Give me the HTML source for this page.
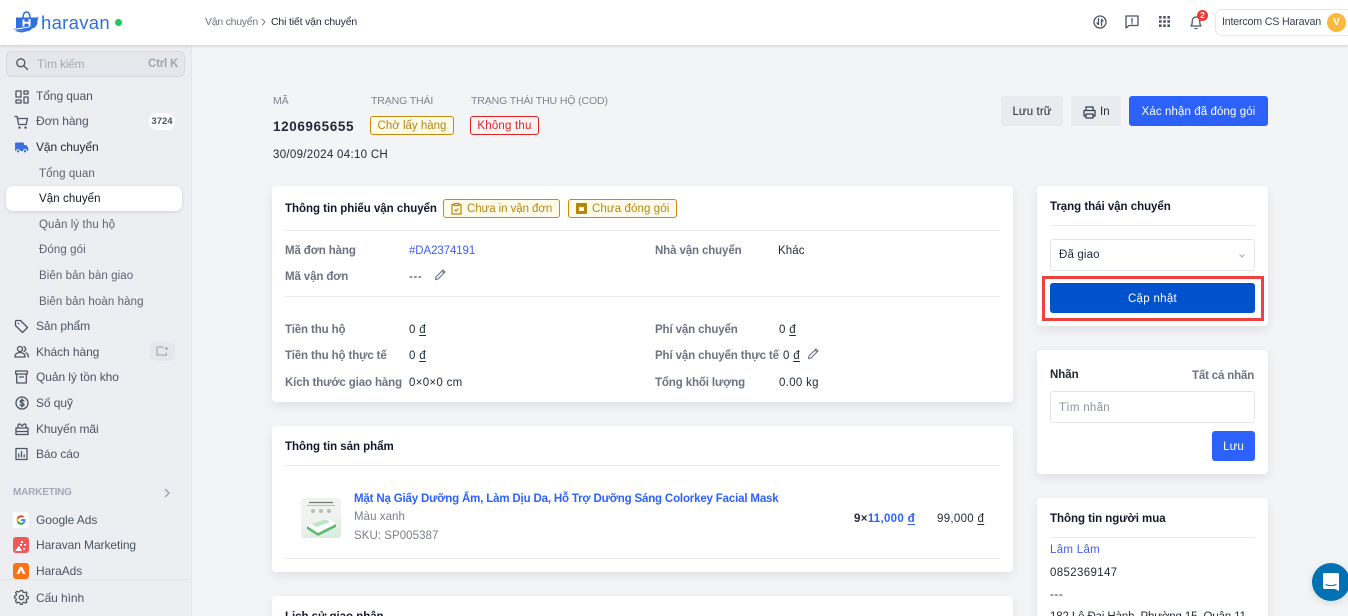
<!DOCTYPE html>
<html lang="vi"><head><meta charset="utf-8"><title>Chi tiết vận chuyển</title>
<style>
*{box-sizing:border-box}
html,body{margin:0;padding:0;width:1348px;height:616px;overflow:hidden;background:#f3f4f6;font-family:"Liberation Sans","Noto Sans CJK SC",sans-serif;font-size:12px;color:#212b36}
#p{position:relative;width:1348px;height:616px;overflow:hidden}
.t{position:absolute;white-space:nowrap;line-height:16px;letter-spacing:.3px;margin-top:1px}
.a{position:absolute}
.card{position:absolute;background:#fff;border-radius:4px;box-shadow:0 4px 10px rgba(33,43,54,.09)}
.hr{position:absolute;height:1px;background:#e8eaed}
.nav{color:#4b5563;font-size:12px;letter-spacing:-.08px;margin-top:0}
.sub{color:#5b6472;font-size:11.5px;letter-spacing:.09px}
.lb{color:#6b7280;font-weight:bold;font-size:11.5px;letter-spacing:-.12px}
.h{font-weight:bold;color:#111827;font-size:11.5px;letter-spacing:-.03px}
.up{color:#7b8494;font-size:10.5px;letter-spacing:-.12px;margin-top:0}
.btn{position:absolute;border-radius:3px;text-align:center;font-size:11.5px;letter-spacing:.1px;padding-top:1px}
.tag{position:absolute;border:1px solid #c98a0c;background:#fffbeb;color:#b7860f;border-radius:3px;height:19px;line-height:18px;font-size:11.5px;letter-spacing:0;white-space:nowrap}
svg{position:absolute;overflow:visible}
.i{fill:none;stroke:#4b5563;stroke-width:1.3;stroke-linecap:round;stroke-linejoin:round}
u{text-underline-offset:2px}
</style></head><body><div id="p">

<!-- sidebar -->
<div class="a" style="left:0;top:45px;width:192px;height:571px;background:#edeef2;border-right:1px solid #e3e5e9"></div>
<div class="a" style="left:6px;top:51px;width:179px;height:26px;background:#e5e7eb;border:1px solid #d5d8de;border-radius:6px"></div>
<svg style="left:15px;top:57px" width="14" height="14" viewBox="0 0 14 14"><circle class="i" cx="5.8" cy="5.8" r="4"/><path class="i" d="M8.8 8.8L12.6 12.6"/></svg>
<div class="t" style="left:37px;top:56px;margin-top:0;color:#a5abb7;letter-spacing:-.25px">Tìm kiếm</div>
<div class="t" style="left:148px;top:56px;margin-top:0;color:#a0a6b2;font-weight:bold;font-size:11.5px;letter-spacing:-.2px">Ctrl K</div>

<svg style="left:15px;top:90px" width="14" height="14" viewBox="0 0 14 14"><path class="i" d="M1 1h5v6H1zM9 1h4v3H9zM9 7h4v6H9zM1 10h5v3H1z"/></svg>
<div class="t nav" style="left:36px;top:88px">Tổng quan</div>
<svg style="left:14px;top:115px" width="15" height="15" viewBox="0 0 15 15"><path class="i" d="M1 1.500h2l1.600 8h7.600l1.300-6H3.500"/><circle cx="5.500" cy="12.600" r="1.200" fill="#4b5563"/><circle cx="11.500" cy="12.600" r="1.200" fill="#4b5563"/></svg>
<div class="t nav" style="left:36px;top:113px">Đơn hàng</div>
<div class="a" style="left:149px;top:113px;width:26px;height:17px;background:#fff;border-radius:9px;text-align:center;font-size:9.500px;line-height:17px;font-weight:bold;color:#4b5563">3724</div>
<svg style="left:14px;top:141px" width="15" height="13" viewBox="0 0 15 13"><path d="M1 2.500A1 1 0 0 1 2 1.500h7a1 1 0 0 1 1 1V4h2.200l2 2.600V10h-13z" fill="#3c6fdc"/><circle cx="4" cy="10.300" r="1.700" fill="#3c6fdc" stroke="#edeef2"/><circle cx="11" cy="10.300" r="1.700" fill="#3c6fdc" stroke="#edeef2"/></svg>
<div class="t nav" style="left:36px;top:139px;color:#1f2937">Vận chuyển</div>
<div class="t sub" style="left:39px;top:165px">Tổng quan</div>
<div class="a" style="left:6px;top:186px;width:176px;height:25px;background:#fff;border-radius:7px;box-shadow:0 1px 3px rgba(0,0,0,.12)"></div>
<div class="t sub" style="left:39px;top:190px;color:#111827">Vận chuyển</div>
<div class="t sub" style="left:39px;top:216px">Quản lý thu hộ</div>
<div class="t sub" style="left:39px;top:241px">Đóng gói</div>
<div class="t sub" style="left:39px;top:267px">Biên bản bàn giao</div>
<div class="t sub" style="left:39px;top:293px">Biên bản hoàn hàng</div>

<svg style="left:14px;top:319px" width="15" height="15" viewBox="0 0 15 15"><path class="i" d="M1.500 2.500a1 1 0 0 1 1-1h4l7 7-5 5-7-7z"/><circle cx="4.500" cy="4.500" r=".8" fill="#4b5563"/></svg>
<div class="t nav" style="left:36px;top:318px">Sản phẩm</div>
<svg style="left:14px;top:345px" width="15" height="14" viewBox="0 0 15 14"><circle class="i" cx="6" cy="4" r="2.500"/><path class="i" d="M1 12c0-3 2-4.500 5-4.500s5 1.500 5 4.500zM10 1.700a2.500 2.500 0 0 1 0 4.700M12 8c1.500.5 2.300 2 2.300 4"/></svg>
<div class="t nav" style="left:36px;top:344px">Khách hàng</div>
<div class="a" style="left:150px;top:342px;width:25px;height:19px;background:#e5e7eb;border-radius:6px"></div>
<svg style="left:156px;top:346px" width="13" height="10" viewBox="0 0 13 10"><path d="M8 1H1v8h9.500V6.500M10.500 1v3M9 2.500h3" fill="none" stroke="#9ca3af"/></svg>
<svg style="left:15px;top:370px" width="13" height="14" viewBox="0 0 13 14"><path class="i" d="M.7 1h11.600v3H.7zM1.700 4v9h9.600V4M4.500 7h4"/></svg>
<div class="t nav" style="left:36px;top:369px">Quản lý tồn kho</div>
<svg style="left:15px;top:396px" width="14" height="14" viewBox="0 0 14 14"><circle class="i" cx="7" cy="7" r="6"/><path class="i" d="M9 5c-.5-1-3.800-1.300-3.800.6 0 1.800 3.800.9 3.800 2.800 0 1.800-3.400 1.600-4 .5M7 3v8"/></svg>
<div class="t nav" style="left:36px;top:395px">Số quỹ</div>
<svg style="left:15px;top:422px" width="14" height="14" viewBox="0 0 14 14"><path class="i" d="M1 6h12v6.500H1zM1 9.500h12M3 6V3M11 6V3M3 3c1-2 2-1 4 1 2-2 3-3 4-1"/></svg>
<div class="t nav" style="left:36px;top:421px">Khuyến mãi</div>
<svg style="left:15px;top:447px" width="13" height="14" viewBox="0 0 13 14"><path class="i" d="M1 1.500h11v11H1zM3.800 10V7M6.500 10V4.500M9.200 10V8"/></svg>
<div class="t nav" style="left:36px;top:446px">Báo cáo</div>
<div class="t" style="left:13px;top:484px;color:#a3a9b5;font-size:10px;font-weight:bold;letter-spacing:-.2px">MARKETING</div>
<svg style="left:164px;top:488px" width="6" height="10" viewBox="0 0 6 10"><path d="M1 1l4 4-4 4" fill="none" stroke="#9ca3af" stroke-width="1.400"/></svg>

<div class="a" style="left:13px;top:512px;width:16px;height:16px;background:#fff;border-radius:3px"></div>
<svg style="left:16px;top:515px" width="10" height="10" viewBox="0 0 10 10"><path d="M9.500 5.100c0-.4 0-.7-.1-1H5v1.900h2.500c-.1.600-.5 1.100-1 1.400l1.500 1.200c.9-.8 1.500-2 1.500-3.500z" fill="#4285f4"/><path d="M5 9.800c1.300 0 2.300-.4 3-1.200L6.500 7.400c-.4.300-1 .4-1.500.4-1.200 0-2.200-.8-2.600-1.900L.9 7.100C1.700 8.700 3.200 9.800 5 9.800z" fill="#34a853"/><path d="M2.400 5.900c-.2-.6-.2-1.200 0-1.800L.9 2.900c-.6 1.300-.6 2.900 0 4.200z" fill="#fbbc05"/><path d="M5 2.100c.7 0 1.300.2 1.800.7l1.300-1.300C7.300.7 6.200.2 5 .2 3.200.2 1.700 1.300.9 2.900l1.500 1.200C2.800 3 3.800 2.100 5 2.100z" fill="#ea4335"/></svg>
<div class="t nav" style="left:36px;top:512px">Google Ads</div>
<div class="a" style="left:13px;top:537px;width:16px;height:16px;background:#ee5a5a;border-radius:3px"></div>
<svg style="left:14px;top:539px" width="14" height="13" viewBox="0 0 14 13"><path d="M1 12l4-5 3 5zM7 2h2v2H7zM10 5h2v1.500h-2zM6 5h2v2H6zM9 9h2v1.500H9z" fill="#fff"/></svg>
<div class="t nav" style="left:36px;top:537px">Haravan Marketing</div>
<div class="a" style="left:13px;top:563px;width:16px;height:16px;background:#f97316;border-radius:3px"></div>
<svg style="left:16px;top:566px" width="10" height="9" viewBox="0 0 10 9"><path d="M3.800 1h2.400L9.500 8H7L5 4 3 8H.5z" fill="#fff"/></svg>
<div class="t nav" style="left:36px;top:563px">HaraAds</div>
<div class="a" style="left:0;top:579px;width:191px;height:37px;background:#edeef2;border-top:1px solid #e1e3e7"></div>
<svg style="left:14px;top:590px" width="15" height="15" viewBox="0 0 15 15"><circle class="i" cx="7.500" cy="7.500" r="2.200"/><path class="i" d="M6.500 1h2l.4 1.700 1.500.7 1.600-.8 1.300 1.500-1 1.400.5 1.600 1.700.5v2l-1.700.4-.6 1.500.9 1.500-1.500 1.300-1.500-.9-1.500.6-.4 1.700h-2l-.4-1.700-1.500-.6-1.500.9L1 12.300l.9-1.500-.6-1.500L0 8.900v-2l1.600-.5.500-1.600-1-1.400 1.400-1.500 1.500.8 1.500-.7z" transform="translate(.5 -.5) scale(.95)"/></svg>
<div class="t nav" style="left:36px;top:590px">Cấu hình</div>

<!-- topbar -->
<div class="a" style="left:0;top:0;width:1348px;height:45px;background:#fff;box-shadow:0 1px 3px rgba(0,0,0,.15)"></div>
<svg style="left:13px;top:11px" width="26" height="23" viewBox="0 0 26 23"><path d="M10 7c0-4 1.500-6 3.500-6S17 3 17 7" fill="none" stroke="#2f6fde" stroke-width="1.500"/><path d="M3 6.500h21l1.500-1-2 9-20.500 3z" fill="#2f6fde"/><path d="M10.500 8.500v7M16.500 8v7M10.500 11.800h6" stroke="#fff" stroke-width="2" fill="none"/><path d="M0 17l4 1.500 12-2 9-5-3 5-10 3-8 .5z" fill="#2f6fde"/><path d="M2 20.500l10-1 8-3-3 3-8 2z" fill="#2f6fde"/></svg>
<div class="t" style="left:41px;top:12px;margin-top:0;color:#2f6fde;font-size:18.500px;line-height:21px;letter-spacing:.3px">haravan</div>
<div class="a" style="left:115px;top:19px;width:7px;height:7px;border-radius:50%;background:#22c55e"></div>
<div class="t" style="left:205px;top:13px;color:#6b7280;font-size:10.500px;letter-spacing:-.25px">Vận chuyển</div>
<svg style="left:261px;top:18px" width="5" height="8" viewBox="0 0 5 8"><path d="M1 .8L4 4 1 7.200" fill="none" stroke="#6b7280" stroke-width=".9"/></svg>
<div class="t" style="left:271px;top:13px;color:#212b36;font-size:10.500px;letter-spacing:-.17px">Chi tiết vận chuyển</div>

<svg style="left:1093px;top:15px" width="14" height="14" viewBox="0 0 14 14"><circle class="i" cx="7" cy="7" r="6"/><path class="i" d="M5.500 3.500v6M5.500 9.500L4 8M8.500 10.500v-6M8.500 4.500L10 6"/></svg>
<svg style="left:1125px;top:15px" width="14" height="14" viewBox="0 0 14 14"><path class="i" d="M1 1h12v9.500H4L1 13zM7 3.500v3.500M7 8.500v.3"/></svg>
<svg style="left:1159px;top:16px" width="11" height="11" viewBox="0 0 11 11" fill="#4b5563"><rect width="2.600" height="2.600"/><rect x="4.200" width="2.600" height="2.600"/><rect x="8.400" width="2.600" height="2.600"/><rect y="4.200" width="2.600" height="2.600"/><rect x="4.200" y="4.200" width="2.600" height="2.600"/><rect x="8.400" y="4.200" width="2.600" height="2.600"/><rect y="8.400" width="2.600" height="2.600"/><rect x="4.200" y="8.400" width="2.600" height="2.600"/><rect x="8.400" y="8.400" width="2.600" height="2.600"/></svg>
<svg style="left:1190px;top:15px" width="12" height="15" viewBox="0 0 12 15"><path class="i" d="M1 11c1.200-1 1.200-2.500 1.200-4.500C2.200 4 3.500 2 6 2s3.800 2 3.800 4.500c0 2 0 3.500 1.200 4.500zM5 13.500h2"/></svg>
<div class="a" style="left:1197px;top:10px;width:11px;height:11px;border-radius:50%;background:#ef3a32;color:#fff;font-size:8.500px;font-weight:bold;line-height:11px;text-align:center">2</div>
<div class="a" style="left:1215px;top:9px;width:140px;height:27px;background:#fff;border:1px solid #e5e7eb;border-radius:7px"></div>
<div class="t" style="left:1222px;top:13px;color:#374151;font-size:10.700px;letter-spacing:-.2px">Intercom CS Haravan</div>
<div class="a" style="left:1327px;top:13px;width:19px;height:19px;border-radius:50%;background:#fbb93c;color:#fff;font-size:10px;font-weight:bold;line-height:19px;text-align:center">V</div>

<!-- header -->
<div class="t up" style="left:273px;top:93px">MÃ</div>
<div class="t up" style="left:371px;top:93px">TRẠNG THÁI</div>
<div class="t up" style="left:471px;top:93px">TRẠNG THÁI THU HỘ (COD)</div>
<div class="t" style="left:273px;top:118px;font-weight:bold;font-size:13.500px;color:#1f2937;letter-spacing:.6px">1206965655</div>
<div class="tag" style="left:370px;top:116px;width:84px;text-align:center">Chờ lấy hàng</div>
<div class="tag" style="left:470px;top:116px;width:69px;text-align:center;background:#fef2f2;border-color:#dc2626;color:#dc2626;letter-spacing:.2px">Không thu</div>
<div class="t" style="left:273px;top:146px;font-size:11.500px;letter-spacing:.3px">30/09/2024 04:10 CH</div>
<div class="btn" style="left:1001px;top:96px;width:62px;height:30px;background:#e9ebee;line-height:30px;color:#1f2937">Lưu trữ</div>
<div class="btn" style="left:1071px;top:96px;width:50px;height:30px;background:#e9ebee;line-height:30px;color:#1f2937;text-align:left;padding-left:29px">In</div>
<svg style="left:1083px;top:106px" width="13" height="13" viewBox="0 0 13 13"><path class="i" style="stroke:#374151" d="M3 4V1h7v3M3 10H1V4.500h11V10h-2M3 8h7v4H3z"/></svg>
<div class="btn" style="left:1129px;top:96px;width:139px;height:30px;background:#2c62fb;line-height:30px;color:#fff">Xác nhận đã đóng gói</div>

<!-- card 1 -->
<div class="card" style="left:272px;top:186px;width:741px;height:216px"></div>
<div class="t h" style="left:285px;top:200px">Thông tin phiếu vận chuyển</div>
<div class="tag" style="left:443px;top:199px;width:117px;padding-left:23px;letter-spacing:-.07px">Chưa in vận đơn</div>
<svg style="left:451px;top:202px" width="11" height="13" viewBox="0 0 11 13"><path d="M3 2.500H1v9.500h9V2.500H8M3 1.500h5v2H3zM3.500 7.500l1.500 1.500 2.500-2.500" fill="none" stroke="#b7860f" stroke-width="1.200"/></svg>
<div class="tag" style="left:568px;top:199px;width:109px;padding-left:23px;letter-spacing:.1px">Chưa đóng gói</div>
<div class="a" style="left:576px;top:203px;width:11px;height:11px;background:#b7860f;border-radius:1px"></div>
<div class="a" style="left:579px;top:207px;width:5px;height:4px;background:#fffbeb"></div>
<div class="hr" style="left:285px;top:230px;width:715px"></div>
<div class="t lb" style="left:285px;top:242px">Mã đơn hàng</div>
<div class="t" style="left:409px;top:242px;color:#3f5ef0;font-size:11.500px;letter-spacing:-.1px">#DA2374191</div>
<div class="t lb" style="left:655px;top:242px">Nhà vận chuyển</div>
<div class="t" style="left:778px;top:242px;font-size:11.500px;letter-spacing:.1px">Khác</div>
<div class="t lb" style="left:285px;top:268px">Mã vận đơn</div>
<div class="t" style="left:409px;top:268px;font-size:11.500px;letter-spacing:.6px">---</div>
<svg style="left:434px;top:268px" width="13" height="13" viewBox="0 0 13 13"><path d="M2 9l7-7 2 2-7 7-2.500.5zM8 3l2 2" fill="none" stroke="#6b7280" stroke-width="1.100"/></svg>
<div class="hr" style="left:285px;top:296px;width:715px"></div>
<div class="t lb" style="left:285px;top:321px">Tiền thu hộ</div>
<div class="t" style="left:409px;top:321px;font-size:11.500px">0 <u>đ</u></div>
<div class="t lb" style="left:655px;top:321px">Phí vận chuyển</div>
<div class="t" style="left:779px;top:321px;font-size:11.500px">0 <u>đ</u></div>
<div class="t lb" style="left:285px;top:347px">Tiền thu hộ thực tế</div>
<div class="t" style="left:409px;top:347px;font-size:11.500px">0 <u>đ</u></div>
<div class="t lb" style="left:655px;top:347px">Phí vận chuyển thực tế</div>
<div class="t" style="left:783px;top:347px;font-size:11.500px">0 <u>đ</u></div>
<svg style="left:807px;top:347px" width="13" height="13" viewBox="0 0 13 13"><path d="M2 9l7-7 2 2-7 7-2.500.5zM8 3l2 2" fill="none" stroke="#6b7280" stroke-width="1.100"/></svg>
<div class="t lb" style="left:285px;top:374px">Kích thước giao hàng</div>
<div class="t" style="left:409px;top:374px;font-size:11.500px">0×0×0 cm</div>
<div class="t lb" style="left:655px;top:374px">Tổng khối lượng</div>
<div class="t" style="left:779px;top:374px;font-size:11.500px">0.00 kg</div>

<!-- card 2 -->
<div class="card" style="left:272px;top:426px;width:741px;height:146px"></div>
<div class="t h" style="left:285px;top:438px">Thông tin sản phẩm</div>
<div class="hr" style="left:285px;top:465px;width:715px"></div>
<div class="a" style="left:301px;top:498px;width:40px;height:40px;background:linear-gradient(165deg,#f1f3f1 50%,#d6ebd9);border-radius:3px"></div>
<svg style="left:301px;top:498px" width="40" height="40" viewBox="0 0 40 40"><path d="M8 4.500h24" stroke="#6f7a72" stroke-width="1.300"/><path d="M6 7.500h28" stroke="#a7aeaa" stroke-width=".8"/><circle cx="12" cy="13" r="2" fill="#b7bdb9"/><circle cx="20" cy="13" r="2" fill="#b7bdb9"/><circle cx="28" cy="13" r="2" fill="#b7bdb9"/><path d="M6 28l20-8 9 6-18 9z" fill="#fff"/><path d="M11 26l14-5 4 3-14 5z" fill="#bfe5c7"/><path d="M6 28l11 7v3L6 31zM17 35l18-9v3L17 38z" fill="#5fba75"/></svg>
<div class="t" style="left:354px;top:490px;color:#2c62fb;font-weight:bold;font-size:11.500px;letter-spacing:-.17px">Mặt Nạ Giấy Dưỡng Ẩm, Làm Dịu Da, Hỗ Trợ Dưỡng Sáng Colorkey Facial Mask</div>
<div class="t" style="left:354px;top:508px;color:#7b7f86;font-size:11.500px;letter-spacing:.05px">Màu xanh</div>
<div class="t" style="left:354px;top:527px;color:#7b7f86;font-size:11.500px;letter-spacing:.05px">SKU: SP005387</div>
<div class="t" style="left:854px;top:510px;font-size:11.500px;font-weight:bold;color:#1f2937">9×<span style="color:#2c62fb">11,000 <u>đ</u></span></div>
<div class="t" style="left:937px;top:510px;font-size:11.500px">99,000 <u>đ</u></div>
<div class="hr" style="left:285px;top:558px;width:715px"></div>

<!-- card 3 -->
<div class="card" style="left:272px;top:596px;width:741px;height:40px"></div>
<div class="t h" style="left:285px;top:608px">Lịch sử giao nhận</div>

<!-- right -->
<div class="card" style="left:1037px;top:186px;width:231px;height:140px"></div>
<div class="t h" style="left:1050px;top:198px">Trạng thái vận chuyển</div>
<div class="hr" style="left:1050px;top:225px;width:205px"></div>
<div class="a" style="left:1050px;top:239px;width:205px;height:32px;border:1px solid #e1e5ea;border-radius:3px;background:#fff"></div>
<div class="t" style="left:1059px;top:246px;font-size:11.500px;letter-spacing:.15px">Đã giao</div>
<svg style="left:1239px;top:254px" width="6" height="4" viewBox="0 0 6 4"><path d="M.6.6L3 3 5.400.6" fill="none" stroke="#9ca3af" stroke-width=".9"/></svg>
<div class="a" style="left:1042px;top:276px;width:222px;height:45px;border:3px solid #f04141"></div>
<div class="btn" style="left:1050px;top:283px;width:205px;height:30px;background:#0052cc;line-height:30px;color:#fff;letter-spacing:.3px">Cập nhật</div>

<div class="card" style="left:1037px;top:350px;width:231px;height:124px"></div>
<div class="t h" style="left:1050px;top:366px;color:#212b36">Nhãn</div>
<div class="t" style="left:1192px;top:367px;font-weight:bold;color:#6b7280;font-size:11.500px;letter-spacing:-.16px">Tất cả nhãn</div>
<div class="a" style="left:1050px;top:391px;width:205px;height:32px;border:1px solid #e1e5ea;border-radius:3px;background:#fff"></div>
<div class="t" style="left:1059px;top:399px;color:#8a93a0;font-size:11.500px">Tìm nhãn</div>
<div class="btn" style="left:1212px;top:431px;width:43px;height:30px;background:#2c62fb;line-height:30px;color:#fff">Lưu</div>

<div class="card" style="left:1037px;top:498px;width:231px;height:140px"></div>
<div class="t h" style="left:1050px;top:510px">Thông tin người mua</div>
<div class="hr" style="left:1050px;top:537px;width:205px"></div>
<div class="t" style="left:1050px;top:541px;color:#3f5ef0;font-size:11.500px">Lâm Lâm</div>
<div class="t" style="left:1050px;top:564px;font-size:11.500px;letter-spacing:.35px">0852369147</div>
<div class="t" style="left:1050px;top:586px;font-size:11.500px;letter-spacing:.6px">---</div>
<div class="t" style="left:1050px;top:608px;font-size:11.500px;letter-spacing:-.13px">182 Lê Đại Hành, Phường 15, Quận 11</div>

<div class="a" style="left:1312px;top:563px;width:38px;height:38px;border-radius:50%;background:#0071b2;box-shadow:0 2px 8px rgba(0,0,0,.12)"></div>
<svg style="left:1322px;top:572px" width="18" height="20" viewBox="0 0 18 20"><path d="M2.500 1h13A1.500 1.500 0 0 1 17 2.500V19l-4-2H2.500A1.500 1.500 0 0 1 1 15.500v-13A1.500 1.500 0 0 1 2.500 1z" fill="#fff"/><path d="M3.500 12.500c3 1.500 8 1.500 11 0" fill="none" stroke="#0071b2" stroke-width="1"/></svg>
</div></body></html>
